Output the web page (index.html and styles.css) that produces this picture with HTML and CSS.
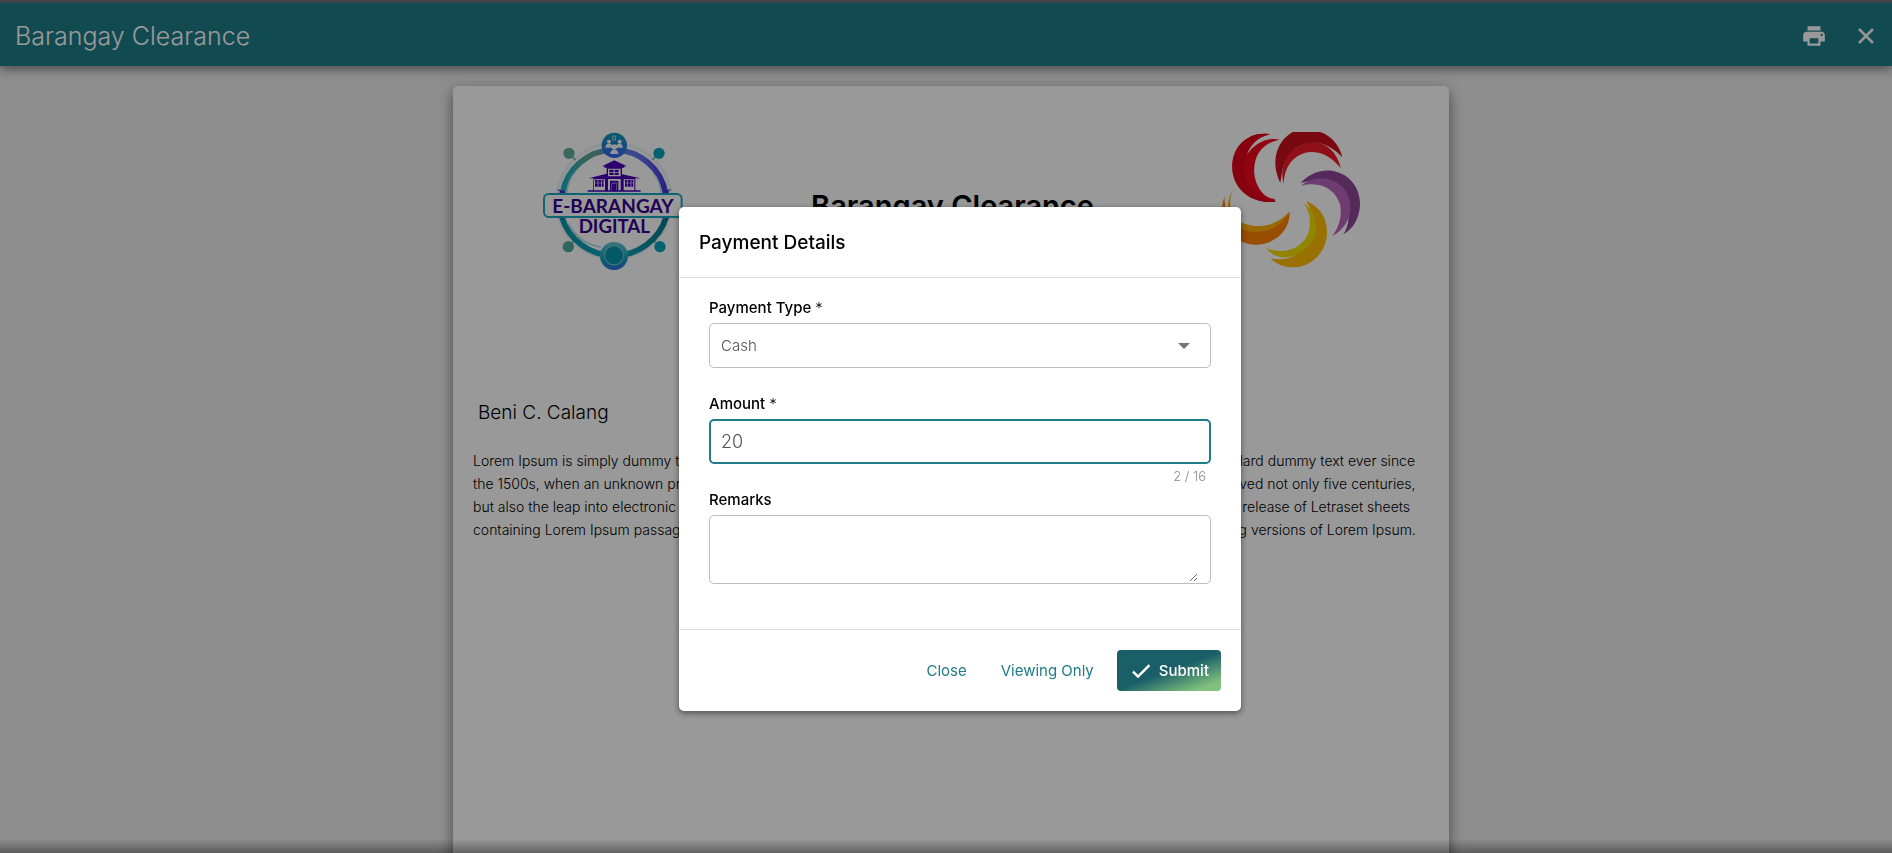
FILE: index.html
```html
<!DOCTYPE html>
<html lang="en">
<head>
<meta charset="utf-8">
<title>Barangay Clearance</title>
<link rel="stylesheet" href="styles.css">
</head>
<body>
<div class="app">
  <header class="toolbar">
    <h1 class="toolbar-title">Barangay Clearance</h1>
    <div class="toolbar-actions">
      <button class="icon-button" type="button" aria-label="Print">
        <svg viewBox="0 0 24 24" width="26" height="26"><path fill="currentColor" d="M19 8H5c-1.66 0-3 1.34-3 3v6h4v4h12v-4h4v-6c0-1.66-1.34-3-3-3zm-3 11H8v-5h8v5zm3-7c-.55 0-1-.45-1-1s.45-1 1-1 1 .45 1 1-.45 1-1 1zm-1-9H6v4h12V3z"/></svg>
      </button>
      <button class="icon-button" type="button" aria-label="Close page">
        <svg viewBox="0 0 24 24" width="26" height="26"><path fill="currentColor" stroke="currentColor" stroke-width=".5" d="M19 6.410 17.590 5 12 10.590 6.410 5 5 6.410 10.590 12 5 17.590 6.410 19 12 13.410 17.590 19 19 17.590 13.410 12z"/></svg>
      </button>
    </div>
  </header>

  <main class="workspace">
    <article class="paper">
      <div class="paper-head">
        <svg class="logo" viewBox="40 36 420 420" role="img" aria-label="E-Barangay Digital">
          <defs>
            <linearGradient id="ring" x1="0" y1="0" x2="1" y2="0"><stop offset="0" stop-color="#10b4cc"/><stop offset=".25" stop-color="#62a592"/><stop offset=".5" stop-color="#5c8fd0"/><stop offset=".75" stop-color="#6272f4"/><stop offset="1" stop-color="#4a38d8"/></linearGradient>
            <linearGradient id="ringLow" x1="0" y1="0" x2="1" y2="0"><stop offset="0" stop-color="#0897a8"/><stop offset=".5" stop-color="#12a8c4"/><stop offset="1" stop-color="#067a88"/></linearGradient>
            <linearGradient id="badge" x1="0" y1="0" x2="0" y2="1"><stop offset="0" stop-color="#0a9cb0"/><stop offset="1" stop-color="#3b62f0"/></linearGradient>
            <linearGradient id="globe" x1="0" y1="0" x2="0" y2="1"><stop offset="0" stop-color="#62c4d2"/><stop offset=".6" stop-color="#12a4bc"/><stop offset="1" stop-color="#2a6fd8"/></linearGradient>
          </defs>
          <circle cx="253" cy="243" r="172" fill="none" stroke="#eef3f4" stroke-width="10"/>
          <g stroke="#6aa8a6" stroke-width="4"><path d="M118 100l20 20M388 100l-20 20M116 380l20-20M390 380l-20-20"/></g>
          <path d="M98 222A157 157 0 0 1 408 222" fill="none" stroke="url(#ring)" stroke-width="17"/>
          <path d="M96 290A164 164 0 0 0 410 290" fill="none" stroke="url(#ringLow)" stroke-width="17"/>
          <path d="M112 218Q114 180 137 155M394 218Q392 184 372 160" fill="none" stroke="#a9d6e4" stroke-width="4"/>
          <path d="M116 310Q144 368 214 382" fill="none" stroke="#b4e1ea" stroke-width="6"/>
          <circle cx="118" cy="100" r="17" fill="#5fae9f"/><circle cx="388" cy="100" r="17" fill="#0ba4bd"/>
          <circle cx="116" cy="380" r="17" fill="#52a99f"/><circle cx="391" cy="380" r="17" fill="#0ba4bd"/>
          <circle cx="254" cy="76" r="38" fill="url(#badge)"/>
          <g fill="#f4fbff"><circle cx="238" cy="65" r="6"/><path d="M227 83q0-12 11-12t11 12z"/><circle cx="270" cy="65" r="6"/><path d="M257 83q2-12 13-12 9 0 9 12z"/><circle cx="254" cy="81" r="8"/><path d="M242 102q0-13 12-13t12 13z"/><path d="M249 48h8v12h-8z" fill="none" stroke="#f4fbff" stroke-width="2"/></g>
          <path fill="#4700b8" d="M254 121l38 18h-8v4h-60v-4h-7zM231 143h46v20l56 12h-16v36h16v4h-159v-4h17v-36h-14l54-14z"/>
          <path fill="#fff" d="M235 146h38v23h-38zM193 178h33v33h-33zM282 178h32v33h-32zM235 177h38v34h-38z"/>
          <g fill="#4700b8"><path d="M239 149h13v7h-13zM255 149h12v7h-12zM239 158h13v7h-13zM255 158h12v7h-12z"/><path d="M196 180h8v8h-8zM206 180h8v8h-8zM216 180h6v8h-6zM196 190h8v10h-8zM206 190h8v10h-8zM216 190h6v10h-6zM286 180h7v8h-7zM295 180h8v8h-8zM305 180h6v8h-6zM286 190h7v10h-7zM295 190h8v10h-8zM305 190h6v10h-6z"/><path d="M241 182h25v31h-5v-25h-15v25h-5z"/><path d="M247 190h13v24h-13z"/></g>
          <path fill="#3d35c4" d="M82 208l22 4 4 10H84l8-6zM425 208l-22 4-4 10h22l-6-6zM84 290h22l-8 7zM402 290h22l-14 7z"/>
          <rect x="43" y="222" width="413" height="69" rx="14" fill="#fff" stroke="#16a9bd" stroke-width="6"/>
          <text class="logo-text" x="250" y="279" font-size="57" text-anchor="middle">E-BARANGAY</text>
          <text class="logo-text" x="254" y="340" font-size="56" text-anchor="middle">DIGITAL</text>
          <circle cx="253" cy="408" r="42" fill="url(#globe)"/><circle cx="253" cy="406" r="30" fill="#7cc4d0"/><circle cx="253" cy="406" r="27" fill="#0594aa"/>
        </svg>
        <h2 class="paper-title">Barangay Clearance</h2>
        <svg class="logo" viewBox="36 36 420 420" role="img" aria-label="Swirl emblem">
          <path fill="#f4061f" d="M180 43C120 33 66 75 67 142c0 65 58 112 130 103l-4-8c-44-4-67-62-59-104 7-43 36-66 75-74-36-8-73 8-99 46 12-33 34-54 70-62z"/>
          <path fill="#e00018" d="M180 43C120 33 66 75 67 142c0 65 58 112 130 103-60-12-100-52-94-112 3-13 5-20 7-28 12-33 34-54 70-62z"/>
          <path fill="#ca101b" d="M211 188c-26-51-20-119 37-152h82c33 10 59 40 67 76-20-21-42-38-72-43-61-6-102 34-110 94z"/>
          <path fill="#f21b29" d="M221 191c-18-70 30-122 92-125 39 4 69 32 79 78-32-39-64-49-89-48-47 3-79 38-82 95z"/>
          <path fill="#8b4697" d="M272 189c20-24 55-42 94-37 55 9 86 54 84 105-3 39-20 68-50 86 15-23 20-55 12-83-14-46-64-91-140-71z"/>
          <path fill="#b864bb" d="M273 197c18-14 45-26 78-21 50 12 73 50 70 90-2 36-22 64-54 82 22-28 30-64 23-95-14-44-55-72-117-56z"/>
          <path fill="#ffbc00" d="M289 244c37 14 62 47 62 92 0 60-47 106-101 106-29 0-53-10-69-27 74 17 124-40 128-87 3-30-4-58-20-84z"/>
          <path fill="#f1dc00" d="M281 249c34 25 46 62 34 99-18 48-98 96-147 37 67 24 122-9 131-62 4-27-2-52-18-74z"/>
          <path fill="#fd8100" d="M44 229c-27 68 24 144 92 145 60 0 105-43 103-99-31 53-118 67-160 31-25-22-37-43-35-77z"/>
          <path fill="#ffaf00" d="M71 207c-18 31-15 77 25 101 50 21 105 10 142-34-22 48-78 73-131 58-53-17-69-79-36-125z"/>
        </svg>
      </div>
      <p class="resident">Beni C. Calang</p>
      <p class="body-text">Lorem Ipsum is simply dummy text of the printing and typesetting industry. Lorem Ipsum has been the industry's standard dummy text ever since<br>the 1500s, when an unknown printer took a galley of type and scrambled it to make a type specimen book. It has survived not only five centuries,<br>but also the leap into electronic typesetting, remaining essentially unchanged. It was popularised in the 1960s with the release of Letraset sheets<br>containing Lorem Ipsum passages, and more recently with desktop publishing software like Aldus PageMaker including versions of Lorem Ipsum.</p>
    </article>
  </main>
</div>

<div class="overlay">
  <form class="dialog" role="dialog" aria-labelledby="dialog-title">
    <h2 class="dialog-title" id="dialog-title">Payment Details</h2>
    <div class="dialog-body">
      <label class="label" for="type">Payment Type <span class="star">*</span></label>
      <div class="field">
        <select class="control select" id="type"><option>Cash</option></select>
        <svg class="arrow" viewBox="0 0 12 6" width="12" height="6"><path fill="#757575" d="M0 0h12L6 6z"/></svg>
      </div>
      <div class="hint"></div>
      <label class="label" for="amount">Amount <span class="star">*</span></label>
      <div class="field active"><input class="control amount" id="amount" type="text" value="20" maxlength="16"></div>
      <div class="hint">2 / 16</div>
      <label class="label" for="remarks">Remarks</label>
      <div class="field tall"><textarea class="control remarks" id="remarks"></textarea></div>
    </div>
    <div class="dialog-actions">
      <button class="text-button" type="button">Close</button>
      <button class="text-button" type="button">Viewing Only</button>
      <button class="submit" type="submit">
        <svg viewBox="0 0 24 24" width="24" height="24"><path fill="currentColor" d="M9 16.170 4.830 12l-1.420 1.410L9 19 21 7l-1.410-1.410z" stroke="currentColor" stroke-width=".6"/></svg>
        Submit
      </button>
    </div>
  </form>
</div>
</body>
</html>
```
FILE: styles.css
```css
* { box-sizing: border-box; }

body {
  margin: 0;
  font-family: Inter, "Liberation Sans", sans-serif;
  font-weight: 300;
  color: #000;
}

h1, h2, p { margin: 0; }

button, input, select, textarea { font: inherit; }

.app {
  display: flex;
  flex-direction: column;
  height: 100vh;
  overflow: hidden;
  background: #ededed;
}

.toolbar {
  position: relative;
  display: flex;
  flex: none;
  align-items: center;
  justify-content: space-between;
  height: 66px;
  padding: 2px 13px 0 15px;
  border-top: 3px solid #6d6f73;
  background: #1f7c89;
  color: #fff;
  box-shadow: 0 3px 10px rgba(0, 0, 0, .5);
}

.toolbar-title {
  font-size: 25px;
  font-weight: 300;
  line-height: 32px;
}

.toolbar-actions { display: flex; gap: 26px; }

.icon-button {
  display: flex;
  padding: 0;
  border: 0;
  background: none;
  color: #fff;
}

.workspace {
  flex: 1;
  min-height: 0;
  padding: 20px 443px 0 453px;
}

.app::after {
  content: "";
  position: fixed;
  inset: auto 0 0;
  height: 14px;
  background: linear-gradient(transparent, rgba(0, 0, 0, .35));
}

.paper {
  height: 1400px;
  padding: 46px 20px 0;
  border-radius: 5px;
  background: #fff;
  box-shadow: 0 5px 14px rgba(0, 0, 0, .5);
}

.paper-head {
  display: flex;
  align-items: center;
  justify-content: space-between;
  padding: 0 67px 0 70px;
}

.logo { width: 140px; height: 140px; flex: none; }

.logo-text {
  font-family: Lato, sans-serif;
  font-weight: 700;
  fill: #37008e;
}

.paper-title {
  padding-top: 8px;
  font-size: 29px;
  font-weight: 600;
  line-height: 36px;
}

.resident {
  padding: 128px 5px 0;
  font-size: 19px;
  line-height: 26px;
}

.body-text {
  padding-top: 23px;
  font-size: 14px;
  line-height: 23px;
  white-space: nowrap;
}

.overlay {
  position: fixed;
  inset: 0;
  display: grid;
  place-items: center;
  padding: 65px 0 0 28px;
  background: rgba(0, 0, 0, .4);
}

.dialog {
  width: 562px;
  border-radius: 5px;
  background: #fff;
  box-shadow: 0 2px 6px rgba(0, 0, 0, .5);
}

.dialog-title {
  padding: 21px 20px 19px;
  border-bottom: 1px solid #ddd;
  font-size: 19px;
  font-weight: 500;
  line-height: 30px;
}

.dialog-body { padding: 20px 30px 45px; }

.label {
  display: block;
  padding-bottom: 5px;
  font-size: 15px;
  font-weight: 500;
  line-height: 20px;
}

.star { font-weight: 300; }

.field {
  display: flex;
  align-items: center;
  min-height: 45px;
  padding: 0 12px 0 11px;
  border: 1px solid #bdbdbd;
  border-radius: 5px;
}

.field.active {
  padding: 0 10px;
  border: 2px solid #1f7c89;
}

.field.tall { min-height: 69px; }

.control {
  flex: 1;
  min-width: 0;
  padding: 0;
  border: 0;
  outline: 0;
  background: transparent;
  color: #555;
}

.select { appearance: none; font-size: 15px; }

.arrow { margin-right: 8px; }

.amount { font-size: 18px; }

.remarks {
  height: 65px;
  resize: vertical;
}

.hint {
  height: 26px;
  padding: 2px 5px 0;
  color: #8a8a8a;
  font-size: 13px;
  line-height: 20px;
  text-align: right;
}

.dialog-actions {
  display: flex;
  align-items: center;
  justify-content: flex-end;
  padding: 20px;
  border-top: 1px solid #ddd;
}

.text-button {
  padding: 10px 17px;
  border: 0;
  background: none;
  color: #1f7c89;
  font-size: 15px;
  font-weight: 400;
  line-height: 21px;
}

.submit {
  display: flex;
  align-items: center;
  gap: 6px;
  height: 41px;
  margin-left: 6px;
  padding: 0 12px;
  border: 0;
  border-radius: 4px;
  background: linear-gradient(160deg, #1a5f68 50%, #81c17d 88%);
  color: #fff;
  font-size: 15px;
  font-weight: 500;
}
```
